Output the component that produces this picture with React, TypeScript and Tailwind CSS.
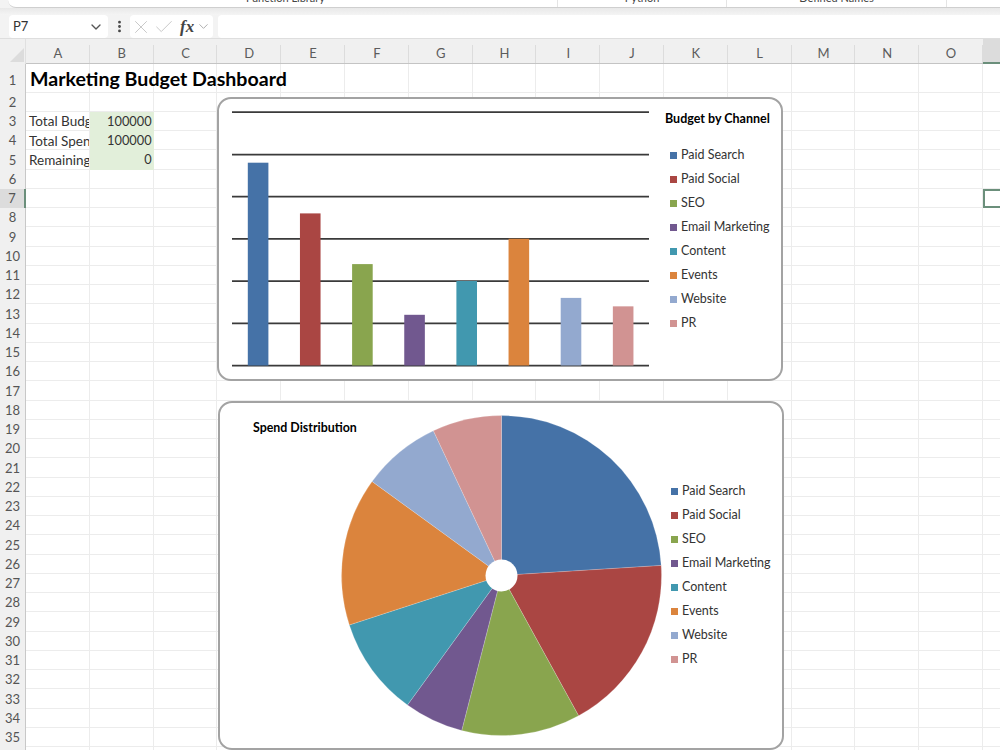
import { Check, ChevronDown, EllipsisVertical, X } from 'lucide-react'

const channels = [
  { name: 'Paid Search', value: 24, color: '#4572a7' },
  { name: 'Paid Social', value: 18, color: '#aa4643' },
  { name: 'SEO', value: 12, color: '#89a54e' },
  { name: 'Email Marketing', value: 6, color: '#71588f' },
  { name: 'Content', value: 10, color: '#4198af' },
  { name: 'Events', value: 15, color: '#db843d' },
  { name: 'Website', value: 8, color: '#93a9cf' },
  { name: 'PR', value: 7, color: '#d19392' },
]

const columns = 'ABCDEFGHIJKLMNOP'.split('')
const rows = Array.from({ length: 36 }, (_, i) => i + 1)

const cells: Record<string, string> = {
  A3: 'Total Budget',
  B3: '100000',
  A4: 'Total Spend',
  B4: '100000',
  A5: 'Remaining',
  B5: '0',
}

const font = "font-['Lato','Noto_Sans',sans-serif]"

function Legend() {
  return (
    <ul className="text-[12.5px] text-[#333]">
      {channels.map((c) => (
        <li key={c.name} className="flex h-[24px] items-center gap-[4px] whitespace-nowrap">
          <span className="h-[7px] w-[7px] shrink-0" style={{ backgroundColor: c.color }} />
          <span className="pt-[1px]">{c.name}</span>
        </li>
      ))}
    </ul>
  )
}

function BarChart() {
  const gridY = [112, 154.5, 196.5, 238.8, 281, 323.3, 365.5]
  const pxPerUnit = (365.5 - 112) / 30
  return (
    <div className="absolute top-[97px] left-[217px] flex h-[284px] w-[566px] rounded-[14px] border-2 border-[#a3a3a3] bg-white">
      <svg className="h-[280px] w-[440px] shrink-0" viewBox="219 99 440 280">
        {gridY.map((y) => (
          <line key={y} x1="232" x2="649" y1={y} y2={y} stroke="#3a3a3a" strokeWidth="1.75" />
        ))}
        {channels.map((c, i) => (
          <rect
            key={c.name}
            x={247.8 + i * 52.15}
            y={365.5 - c.value * pxPerUnit}
            width="20.6"
            height={c.value * pxPerUnit}
            fill={c.color}
          />
        ))}
      </svg>
      <div className="pt-[12px] pl-[6px]">
        <div className="mb-[16px] h-[16px] text-[12.5px] leading-[16px] font-bold whitespace-nowrap text-black">
          Budget by Channel
        </div>
        <div className="pl-[5px]">
          <Legend />
        </div>
      </div>
    </div>
  )
}

function PieChart() {
  const cx = 501.5
  const cy = 575.5
  const r = 160
  let run = 0
  const slices = channels.map((c) => {
    const a0 = (run / 100) * Math.PI * 2
    run += c.value
    const a1 = (run / 100) * Math.PI * 2
    const x0 = cx + r * Math.sin(a0)
    const y0 = cy - r * Math.cos(a0)
    const x1 = cx + r * Math.sin(a1)
    const y1 = cy - r * Math.cos(a1)
    const large = a1 - a0 > Math.PI ? 1 : 0
    return { ...c, d: `M${cx} ${cy}L${x0} ${y0}A${r} ${r} 0 ${large} 1 ${x1} ${y1}Z` }
  })
  return (
    <div className="absolute top-[401px] left-[218px] flex h-[349px] w-[566px] rounded-[14px] border-2 border-[#a3a3a3] bg-white">
      <div className="w-[120px] shrink-0 pt-[17px] pl-[33px]">
        <div className="h-[16px] text-[12.4px] leading-[16px] font-bold whitespace-nowrap text-black">
          Spend Distribution
        </div>
      </div>
      <svg className="h-[345px] w-[325px] shrink-0" viewBox="340 403 325 345">
        {slices.map((s) => (
          <path key={s.name} d={s.d} fill={s.color} stroke="#ffffff" strokeOpacity="0.25" strokeWidth="0.75" />
        ))}
        <circle cx={cx} cy={cy} r="16" fill="#ffffff" />
      </svg>
      <div className="pt-[76px] pl-[6px]">
        <Legend />
      </div>
    </div>
  )
}

function FormulaBar() {
  return (
    <div className="flex h-[23px] items-stretch pl-[9px]">
      <div className="flex w-[99px] items-center justify-between rounded-[4px] bg-white pr-[4px] pl-[4px] text-[13px] text-[#333]">
        P7
        <ChevronDown className="h-[16px] w-[16px] text-[#555]" strokeWidth={2} />
      </div>
      <div className="flex w-[22px] items-center justify-center">
        <EllipsisVertical className="h-[15px] w-[15px] text-[#444]" strokeWidth={2.5} />
      </div>
      <div className="flex w-[83px] items-center rounded-[4px] bg-white">
        <X className="h-[22px] w-[22px] text-[#c4c4c4]" strokeWidth={1} />
        <Check className="ml-[1px] h-[22px] w-[22px] text-[#c4c4c4]" strokeWidth={1} />
        <span className="ml-[5px] font-['Liberation_Serif',serif] text-[17px] leading-[20px] font-bold text-[#444] italic">
          fx
        </span>
        <ChevronDown className="ml-[2px] h-[15px] w-[15px] text-[#aaa]" strokeWidth={1.5} />
      </div>
      <div className="ml-[5px] flex-1 rounded-l-[4px] bg-white" />
    </div>
  )
}

function ColumnHeader() {
  return (
    <div className="flex h-[26px] border-t border-[#dedede] bg-[#f0f0f0]">
      <div className="relative w-[26px] shrink-0 border-r border-[#e0e0e0]">
        <svg className="absolute top-[9px] left-[10px] h-[14px] w-[14px]" viewBox="0 0 14 14">
          <path d="M14 0V14H0Z" fill="#dcdcdc" />
        </svg>
      </div>
      {columns.map((col) => (
        <div
          key={col}
          className={`flex w-[63.8px] shrink-0 items-end justify-center ${
            col === 'P' ? 'border-b-2 border-[#6b8f7b] bg-[#dcdcdc]' : 'border-b border-[#c4c4c4]'
          }`}
        >
          <span
            className={`flex h-[18px] w-full items-center justify-center border-r pl-[1px] text-[13px] text-[#5c5c5c] ${
              col === 'P' ? 'border-transparent' : 'border-[#dcdcdc]'
            }`}
          >
            {col === 'P' ? '' : col}
          </span>
        </div>
      ))}
    </div>
  )
}

function cellStyle(id: string, isValue: boolean) {
  if (id === 'P7') return 'border-2 border-[#6b8f7b] bg-white'
  if (isValue) return 'justify-end border-r border-b border-[#e2efda] bg-[#e2efda] pr-[1px] text-[12.8px]'
  return 'border-r border-b border-[#ececec] bg-white pl-[3px] text-[13.5px]'
}

function SheetRow({ row }: { row: number }) {
  const selected = row === 7
  return (
    <div className={`flex ${row === 1 ? 'h-[28.5px]' : 'h-[19.25px]'}`}>
      <div
        className={`flex w-[26px] shrink-0 items-center justify-center text-[13px] text-[#555] ${
          selected ? 'border-r-2 border-[#6b8f7b] bg-[#dcdcdc]' : 'border-r border-[#c8c8c8] bg-[#f0f0f0]'
        } ${row === 1 ? 'pt-[5px]' : 'pt-[1px]'}`}
      >
        {row === 36 ? '' : row}
      </div>
      {columns.map((col) => {
        const id = `${col}${row}`
        const isValue = col === 'B' && row >= 3 && row <= 5
        return (
          <div
            key={col}
            className={`flex w-[63.8px] shrink-0 items-center overflow-hidden pt-[1px] whitespace-nowrap text-[#333] ${cellStyle(id, isValue)}`}
          >
            {cells[id]}
          </div>
        )
      })}
    </div>
  )
}

export default function App() {
  return (
    <div className={`relative h-[750px] w-[1000px] overflow-hidden bg-[#f3f3f3] ${font}`}>
      <div className="ml-[8px] flex h-[8px] overflow-hidden rounded-bl-[8px] border-b border-[#cfcfcf] bg-white text-[11px] leading-[12px] text-[#444]">
        <div className="flex w-[550px] justify-center border-r border-[#e4e4e4] pl-[6px]">
          <span className="-mt-[8px]">Function Library</span>
        </div>
        <div className="flex w-[169px] justify-center border-r border-[#e4e4e4]">
          <span className="-mt-[8px]">Python</span>
        </div>
        <div className="flex w-[220px] justify-center border-r border-[#e4e4e4]">
          <span className="-mt-[8px]">Defined Names</span>
        </div>
      </div>
      <div className="h-[7px] bg-gradient-to-b from-[#e9e9e9] to-[#f4f4f4]" />
      <FormulaBar />
      <ColumnHeader />
      <div className="overflow-hidden">
        {rows.map((row) =>
          row === 1 ? (
            <div key={row} className="relative">
              <SheetRow row={row} />
              <div className="absolute top-[2px] left-[30px] text-[19.6px] leading-[26px] font-bold whitespace-nowrap text-black">
                Marketing Budget Dashboard
              </div>
            </div>
          ) : (
            <SheetRow key={row} row={row} />
          ),
        )}
      </div>
      <BarChart />
      <PieChart />
    </div>
  )
}
